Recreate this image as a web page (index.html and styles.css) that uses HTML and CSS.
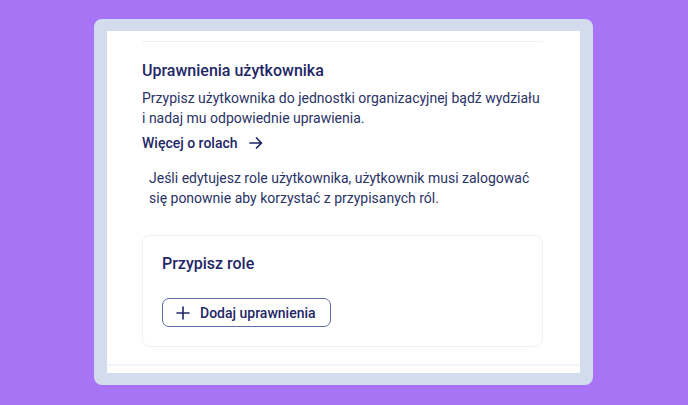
FILE: index.html
```html
<!DOCTYPE html>
<html lang="pl">
<head>
<meta charset="utf-8">
<link rel="stylesheet" href="styles.css">
</head>
<body>
<div class="frame">
  <div class="panel">
    <div class="content">
      <hr class="divider">
      <h2 class="title">Uprawnienia użytkownika</h2>
      <p class="desc">Przypisz użytkownika do jednostki organizacyjnej bądź wydziału i nadaj mu odpowiednie uprawienia.</p>
      <a class="more" href="#">Więcej o rolach
        <svg class="arrow" width="16" height="16" viewBox="0 0 16 16" fill="none"><path d="M2 8h11.5M8.5 3 13.5 8l-5 5" stroke="currentColor" stroke-width="1.7" stroke-linecap="round" stroke-linejoin="round"/></svg>
      </a>
      <p class="note">Jeśli edytujesz role użytkownika, użytkownik musi zalogować się ponownie aby korzystać z przypisanych ról.</p>
      <div class="card">
        <h3 class="card-title">Przypisz role</h3>
        <button class="btn" type="button">
          <svg width="14" height="14" viewBox="0 0 14 14" fill="none"><path d="M7 1v12M1 7h12" stroke="currentColor" stroke-width="1.6" stroke-linecap="round"/></svg>
          <span>Dodaj uprawnienia</span>
        </button>
      </div>
    </div>
    <div class="bottom-line"></div>
  </div>
</div>
</body>
</html>
```

FILE: styles.css
```css
* { box-sizing: border-box; }
html, body { margin: 0; padding: 0; }
body {
  background: #a874f6;
  width: 688px;
  height: 405px;
  font-family: Roboto, "Open Sans", sans-serif;
  color: #2a3266;
  padding: 19px 0 0 94px;
}
.frame {
  width: 499px;
  height: 366px;
  background: #d3dcec;
  border-radius: 8px;
  padding: 12px 13px 12px 13px;
}
.panel {
  background: #fff;
  height: 342px;
  display: flex;
  flex-direction: column;
  overflow: hidden;
}
.content {
  padding: 10px 37px 0 35px;
  flex: 1;
  display: flex;
  flex-direction: column;
  align-items: flex-start;
}
.divider {
  border: 0;
  border-top: 1px solid #edf0f7;
  margin: 0;
  align-self: stretch;
}
.title {
  margin: 18px 0 0;
  font-size: 16px;
  line-height: 22px;
  font-weight: 500;
  color: #1f2766;
}
.desc {
  margin: 6px 0 0;
  font-size: 14px;
  line-height: 20px;
  color: #2a3266;
}
.more {
  display: flex;
  align-items: center;
  gap: 10px;
  margin-top: 5px;
  font-size: 14px;
  line-height: 20px;
  font-weight: 500;
  color: #1f2766;
  text-decoration: none;
}
.note {
  margin: 16px 0 0;
  padding: 0 7px;
  font-size: 14px;
  line-height: 19.5px;
  color: #2a3266;
}
.card {
  align-self: stretch;
  margin-top: 27px;
  border: 1px solid #eef1f8;
  border-radius: 8px;
  padding: 17px 19px 0;
  height: 112px;
  display: flex;
  flex-direction: column;
  align-items: flex-start;
}
.card-title {
  margin: 0;
  font-size: 16px;
  line-height: 22px;
  font-weight: 500;
  color: #1f2766;
}
.btn {
  margin-top: 23px;
  display: flex;
  align-items: center;
  gap: 10px;
  height: 29px;
  padding: 0 14px 0 13px;
  border: 1px solid #5f6aa6;
  border-radius: 7px;
  background: #fff;
  font-family: inherit;
  font-size: 14px;
  font-weight: 500;
  color: #1f2766;
}
.bottom-line {
  height: 2px;
  background: #f0f4fb;
  margin-bottom: 7px;
}
```
